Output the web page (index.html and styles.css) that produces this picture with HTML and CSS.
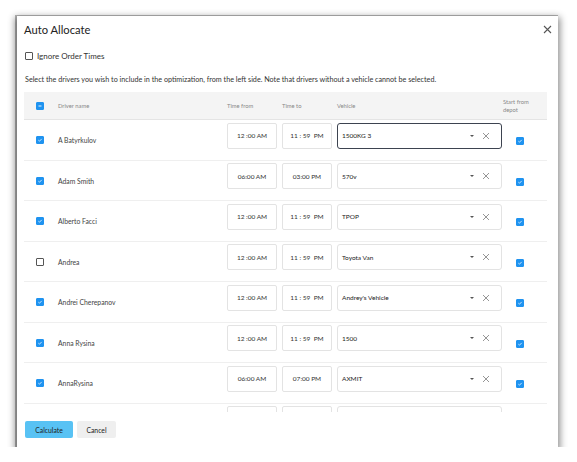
FILE: index.html
```html
<!DOCTYPE html>
<html>
<head>
<meta charset="utf-8">
<link rel="stylesheet" href="styles.css">
</head>
<body>
<div class="dialog">
  <div class="dlg-head">
    <h1 class="title">Auto Allocate</h1>
    <span class="close"><svg width="9" height="9" viewBox="0 0 9 9"><path d="M1 1L8 8M8 1L1 8" stroke="#555" stroke-width="1.1" fill="none"/></svg></span>
  </div>
  <label class="ignore"><span class="cb"></span>Ignore Order Times</label>
  <p class="hint">Select the drivers you wish to include in the optimization, from the left side. Note that drivers without a vehicle cannot be selected.</p>
  <div class="table">
    <div class="grid thead">
      <div class="c-check"><span class="cb on minus"><svg width="8" height="8" viewBox="0 0 8 8"><path d="M2 4H6" stroke="#fff" stroke-width="1.2"/></svg></span></div>
      <div>Driver name</div>
      <div>Time from</div>
      <div>Time to</div>
      <div>Vehicle</div>
      <div class="h-depot">Start from depot</div>
    </div>

    <div class="grid trow">
      <div class="c-check"><span class="cb on"><svg width="8" height="8" viewBox="0 0 8 8"><path d="M1.8 4.2L3.3 5.6L6.3 2.5" stroke="#fff" stroke-width="1" fill="none"/></svg></span></div>
      <div class="name">A Batyrkulov</div>
      <div><div class="tin">12 :00 AM</div></div>
      <div><div class="tin">11 : 59 &nbsp;PM</div></div>
      <div><div class="sel focus"><span class="val">1500KG 3</span><span class="caret"></span><svg class="x" width="8" height="8" viewBox="0 0 8 8"><path d="M1 1L7 7M7 1L1 7" stroke="#8a8a8a" stroke-width="0.9"/></svg></div></div>
      <div class="c-depot"><span class="cb on"><svg width="8" height="8" viewBox="0 0 8 8"><path d="M1.8 4.2L3.3 5.6L6.3 2.5" stroke="#fff" stroke-width="1" fill="none"/></svg></span></div>
    </div>

    <div class="grid trow">
      <div class="c-check"><span class="cb on"><svg width="8" height="8" viewBox="0 0 8 8"><path d="M1.8 4.2L3.3 5.6L6.3 2.5" stroke="#fff" stroke-width="1" fill="none"/></svg></span></div>
      <div class="name">Adam Smith</div>
      <div><div class="tin">06:00 AM</div></div>
      <div><div class="tin">03:00 PM</div></div>
      <div><div class="sel"><span class="val">570v</span><span class="caret"></span><svg class="x" width="8" height="8" viewBox="0 0 8 8"><path d="M1 1L7 7M7 1L1 7" stroke="#8a8a8a" stroke-width="0.9"/></svg></div></div>
      <div class="c-depot"><span class="cb on"><svg width="8" height="8" viewBox="0 0 8 8"><path d="M1.8 4.2L3.3 5.6L6.3 2.5" stroke="#fff" stroke-width="1" fill="none"/></svg></span></div>
    </div>

    <div class="grid trow">
      <div class="c-check"><span class="cb on"><svg width="8" height="8" viewBox="0 0 8 8"><path d="M1.8 4.2L3.3 5.6L6.3 2.5" stroke="#fff" stroke-width="1" fill="none"/></svg></span></div>
      <div class="name">Alberto Facci</div>
      <div><div class="tin">12 :00 AM</div></div>
      <div><div class="tin">11 : 59 &nbsp;PM</div></div>
      <div><div class="sel"><span class="val">TPOP</span><span class="caret"></span><svg class="x" width="8" height="8" viewBox="0 0 8 8"><path d="M1 1L7 7M7 1L1 7" stroke="#8a8a8a" stroke-width="0.9"/></svg></div></div>
      <div class="c-depot"><span class="cb on"><svg width="8" height="8" viewBox="0 0 8 8"><path d="M1.8 4.2L3.3 5.6L6.3 2.5" stroke="#fff" stroke-width="1" fill="none"/></svg></span></div>
    </div>

    <div class="grid trow">
      <div class="c-check"><span class="cb"></span></div>
      <div class="name">Andrea</div>
      <div><div class="tin">12 :00 AM</div></div>
      <div><div class="tin">11 : 59 &nbsp;PM</div></div>
      <div><div class="sel"><span class="val">Toyota Van</span><span class="caret"></span><svg class="x" width="8" height="8" viewBox="0 0 8 8"><path d="M1 1L7 7M7 1L1 7" stroke="#8a8a8a" stroke-width="0.9"/></svg></div></div>
      <div class="c-depot"><span class="cb on"><svg width="8" height="8" viewBox="0 0 8 8"><path d="M1.8 4.2L3.3 5.6L6.3 2.5" stroke="#fff" stroke-width="1" fill="none"/></svg></span></div>
    </div>

    <div class="grid trow">
      <div class="c-check"><span class="cb on"><svg width="8" height="8" viewBox="0 0 8 8"><path d="M1.8 4.2L3.3 5.6L6.3 2.5" stroke="#fff" stroke-width="1" fill="none"/></svg></span></div>
      <div class="name">Andrei Cherepanov</div>
      <div><div class="tin">12 :00 AM</div></div>
      <div><div class="tin">11 : 59 &nbsp;PM</div></div>
      <div><div class="sel"><span class="val">Andrey's Vehicle</span><span class="caret"></span><svg class="x" width="8" height="8" viewBox="0 0 8 8"><path d="M1 1L7 7M7 1L1 7" stroke="#8a8a8a" stroke-width="0.9"/></svg></div></div>
      <div class="c-depot"><span class="cb on"><svg width="8" height="8" viewBox="0 0 8 8"><path d="M1.8 4.2L3.3 5.6L6.3 2.5" stroke="#fff" stroke-width="1" fill="none"/></svg></span></div>
    </div>

    <div class="grid trow">
      <div class="c-check"><span class="cb on"><svg width="8" height="8" viewBox="0 0 8 8"><path d="M1.8 4.2L3.3 5.6L6.3 2.5" stroke="#fff" stroke-width="1" fill="none"/></svg></span></div>
      <div class="name">Anna Rysina</div>
      <div><div class="tin">12 :00 AM</div></div>
      <div><div class="tin">11 : 59 &nbsp;PM</div></div>
      <div><div class="sel"><span class="val">1500</span><span class="caret"></span><svg class="x" width="8" height="8" viewBox="0 0 8 8"><path d="M1 1L7 7M7 1L1 7" stroke="#8a8a8a" stroke-width="0.9"/></svg></div></div>
      <div class="c-depot"><span class="cb on"><svg width="8" height="8" viewBox="0 0 8 8"><path d="M1.8 4.2L3.3 5.6L6.3 2.5" stroke="#fff" stroke-width="1" fill="none"/></svg></span></div>
    </div>

    <div class="grid trow">
      <div class="c-check"><span class="cb on"><svg width="8" height="8" viewBox="0 0 8 8"><path d="M1.8 4.2L3.3 5.6L6.3 2.5" stroke="#fff" stroke-width="1" fill="none"/></svg></span></div>
      <div class="name">AnnaRysina</div>
      <div><div class="tin">06:00 AM</div></div>
      <div><div class="tin">07:00 PM</div></div>
      <div><div class="sel"><span class="val">AXMIT</span><span class="caret"></span><svg class="x" width="8" height="8" viewBox="0 0 8 8"><path d="M1 1L7 7M7 1L1 7" stroke="#8a8a8a" stroke-width="0.9"/></svg></div></div>
      <div class="c-depot"><span class="cb on"><svg width="8" height="8" viewBox="0 0 8 8"><path d="M1.8 4.2L3.3 5.6L6.3 2.5" stroke="#fff" stroke-width="1" fill="none"/></svg></span></div>
    </div>

    <div class="grid trow">
      <div class="c-check"></div>
      <div class="name"></div>
      <div><div class="tin"></div></div>
      <div><div class="tin"></div></div>
      <div><div class="sel"></div></div>
      <div class="c-depot"></div>
    </div>
  </div>
  <div class="actions">
    <button class="btn primary">Calculate</button>
    <button class="btn">Cancel</button>
  </div>
</div>
</body>
</html>
```

FILE: styles.css
```css
* { box-sizing: border-box; }
html, body { margin: 0; padding: 0; background: #fff; }
body {
  font-family: Lato, "Noto Sans", sans-serif;
  color: #333;
}
.dialog {
  margin: 16px 0 0 17px;
  width: 541px;
  padding: 0 11px 9px 7px;
  background: #fff;
  box-shadow: -1px 0 0 1px rgba(0,0,0,0.28), 0 3px 7px 2px rgba(0,0,0,0.45);
}
.dlg-head {
  height: 26px;
  display: flex;
  align-items: center;
  justify-content: space-between;
}
.title {
  margin: 0;
  font-size: 11.2px;
  font-weight: 400;
  color: #222;
}
.close { display: flex; margin-right: -5px; }
.ignore {
  margin-top: 8px;
  height: 12px;
  display: flex;
  align-items: center;
  gap: 4px;
  padding-left: 1px;
  font-size: 8px;
  color: #333;
}
.cb {
  width: 8px;
  height: 8px;
  border: 1px solid #555;
  border-radius: 1px;
  background: #fff;
  display: inline-flex;
  align-items: center;
  justify-content: center;
  flex: none;
}
.cb.on {
  background: #1f93f0;
  border-color: #1f93f0;
}
.cb svg { display: block; }
.hint {
  margin: 12px 0 0 1px;
  height: 12px;
  line-height: 12px;
  font-size: 7.2px;
  color: #333;
  white-space: nowrap;
}
.table {
  margin-top: 6px;
  height: 320px;
  overflow: hidden;
}
.grid {
  display: grid;
  grid-template-columns: 34px 169px 55px 55px 168px 1fr;
}
.thead {
  height: 28px;
  background: #f4f4f4;
  border-bottom: 1px solid #e4e4e4;
  align-items: center;
  font-size: 5.8px;
  color: #888;
}
.h-depot { line-height: 8px; padding-top: 1px; margin-left: -2px; width: 36px; }
.c-check { padding-left: 12px; display: flex; align-items: center; }
.trow {
  height: 40.5px;
  border-bottom: 1px solid #efefef;
  align-items: start;
}
.trow > .c-check, .trow > .name { align-self: center; }
.trow > .c-check { margin-top: 1px; }
.name { font-size: 6.8px; color: #444; margin-top: 1px; }
.trow > div:nth-child(3), .trow > div:nth-child(4), .trow > div:nth-child(5) { padding-top: 2.5px; }
.tin {
  width: 50px;
  height: 26px;
  border: 1px solid #e3e3e3;
  border-radius: 2px;
  display: flex;
  align-items: center;
  justify-content: center;
  font-size: 6.5px;
  color: #333;
  white-space: nowrap;
}
.sel {
  width: 165px;
  height: 26px;
  border: 1px solid #e3e3e3;
  border-radius: 3px;
  display: flex;
  align-items: center;
  padding-left: 4px;
  font-size: 6.5px;
  color: #222;
}
.sel.focus { border-color: #3d4350; }
.sel .val { flex: 1; }
.caret {
  width: 0; height: 0;
  border-left: 2.5px solid transparent;
  border-right: 2.5px solid transparent;
  border-top: 2.5px solid #555;
  margin-right: 8px;
}
.sel .x { margin-right: 11px; }
.c-depot { align-self: center; padding-left: 11px; margin-top: 3px; display: flex; }
.actions {
  margin-top: 9px;
  display: flex;
  gap: 4px;
  padding-left: 1px;
}
.btn {
  height: 17px;
  border: none;
  border-radius: 2px;
  background: #efefef;
  font-family: Lato, "Noto Sans", sans-serif;
  font-size: 6.8px;
  color: #222;
  padding: 0;
  width: 39px;
  text-align: center;
}
.btn.primary { background: #58c2f4; width: 48px; }
```
